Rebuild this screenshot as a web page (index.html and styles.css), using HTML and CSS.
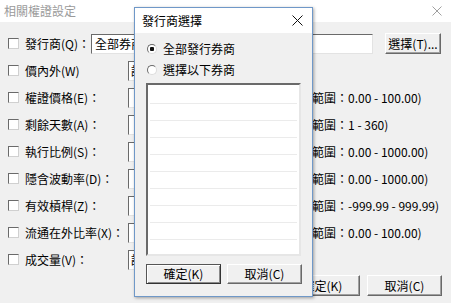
FILE: index.html
```html
<!DOCTYPE html>
<html>
  <head>
    <title>相關權證設定</title>
    <link rel="stylesheet" href="styles.css">
  </head>
  <body>
    <div class="window">
      <div class="titlebar">
        <span class="title">相關權證設定</span>
        <svg class="close" width="10" height="10" viewBox="0 0 10 10">
          <path d="M0.5 0.5 L9.5 9.5 M9.5 0.5 L0.5 9.5" stroke="#a0a0a0" stroke-width="1" fill="none" />
        </svg>
      </div>

      <div class="form">
        <div class="row">
          <span class="check"></span>
          <span class="label label-short">發行商(Q)：</span>
          <div class="field field-wide">全部券商</div>
          <div class="btn btn-pick">選擇(T)...</div>
        </div>
        <div class="row">
          <span class="check"></span>
          <span class="label">價內外(W)</span>
          <div class="field field-select">請選擇</div>
        </div>
        <div class="row">
          <span class="check"></span>
          <span class="label">權證價格(E)：</span>
          <div class="field"></div>
          <span class="range">(範圍：0.00 - 100.00)</span>
        </div>
        <div class="row">
          <span class="check"></span>
          <span class="label">剩餘天數(A)：</span>
          <div class="field"></div>
          <span class="range">(範圍：1 - 360)</span>
        </div>
        <div class="row">
          <span class="check"></span>
          <span class="label">執行比例(S)：</span>
          <div class="field"></div>
          <span class="range">(範圍：0.00 - 1000.00)</span>
        </div>
        <div class="row">
          <span class="check"></span>
          <span class="label">隱含波動率(D)：</span>
          <div class="field"></div>
          <span class="range">(範圍：0.00 - 1000.00)</span>
        </div>
        <div class="row">
          <span class="check"></span>
          <span class="label">有效槓桿(Z)：</span>
          <div class="field"></div>
          <span class="range">(範圍：-999.99 - 999.99)</span>
        </div>
        <div class="row">
          <span class="check"></span>
          <span class="label">流通在外比率(X)：</span>
          <div class="field"></div>
          <span class="range">(範圍：0.00 - 100.00)</span>
        </div>
        <div class="row">
          <span class="check"></span>
          <span class="label">成交量(V)：</span>
          <div class="field field-select">請選擇</div>
        </div>
      </div>

      <div class="actions">
        <div class="btn">確定(K)</div>
        <div class="btn">取消(C)</div>
      </div>

      <div class="dialog">
        <div class="dialog-bar">
          <span class="dialog-title">發行商選擇</span>
          <svg class="close" width="11" height="11" viewBox="0 0 11 11">
            <path d="M0.5 0.5 L10.5 10.5 M10.5 0.5 L0.5 10.5" stroke="#111" stroke-width="1" fill="none" />
          </svg>
        </div>
        <div class="dialog-body">
          <div class="radio-row">
            <span class="radio radio-on"></span>
            <span class="radio-text">全部發行券商</span>
          </div>
          <div class="radio-row">
            <span class="radio"></span>
            <span class="radio-text">選擇以下券商</span>
          </div>
          <div class="listbox">
            <div class="list-item"></div>
            <div class="list-item"></div>
            <div class="list-item"></div>
            <div class="list-item"></div>
            <div class="list-item"></div>
            <div class="list-item"></div>
            <div class="list-item"></div>
            <div class="list-item"></div>
            <div class="list-item"></div>
          </div>
          <div class="dialog-actions">
            <div class="btn btn-default">確定(K)</div>
            <div class="btn">取消(C)</div>
          </div>
        </div>
      </div>
    </div>
  </body>
</html>
```

FILE: styles.css
```css
* {
  box-sizing: border-box;
}
body {
  margin: 0;
  font: 12px/14px "Liberation Sans Narrow", "Noto Sans CJK TC", sans-serif;
  color: #000;
}
.window {
  position: relative;
  width: 451px;
  height: 303px;
  background: #f0f0f0;
  overflow: hidden;
}
.titlebar {
  height: 22px;
  background: #fff;
  color: #9a9a9a;
  display: flex;
  align-items: center;
  justify-content: space-between;
  padding: 0 9px 0 4px;
}
.form {
  padding: 8px 0 0 8px;
}
.row {
  height: 27px;
  display: flex;
  align-items: center;
}
.check {
  width: 11px;
  height: 11px;
  margin-right: 6px;
  background: #fff;
  border: 1px solid;
  border-color: #6a6a6a #d0d0d0 #d0d0d0 #6a6a6a;
}
.label {
  width: 103px;
  white-space: nowrap;
}
.label-short {
  width: 66px;
}
.field {
  width: 175px;
  height: 20px;
  padding-left: 3px;
  line-height: 18px;
  background: #fff;
  border: 1px solid;
  border-color: #6a6a6a #e3e3e3 #e3e3e3 #6a6a6a;
  white-space: nowrap;
  overflow: hidden;
}
.field-wide {
  width: 282px;
}
.field-select {
  width: 165px;
  padding-left: 2px;
}
.range {
  margin-left: 5px;
  white-space: nowrap;
}
.btn {
  width: 75px;
  height: 21px;
  display: flex;
  align-items: center;
  justify-content: center;
  background: #f0f0f0;
  border: 1px solid;
  border-color: #fff #696969 #696969 #fff;
  box-shadow: inset -1px -1px #a0a0a0;
}
.btn-pick {
  width: 56px;
  margin-left: 12px;
}
.btn-default {
  border-color: #555 #333 #333 #555;
  box-shadow: inset 1px 1px #fff, inset -1px -1px #8a8a8a;
}
.actions {
  display: flex;
  justify-content: flex-end;
  gap: 7px;
  margin-top: 2px;
  padding-right: 9px;
}
.dialog {
  position: absolute;
  left: 134px;
  top: 7px;
  width: 179px;
  height: 290px;
  background: #f0f0f0;
  border: 1px solid #6f98c8;
  box-shadow: 1px 1px 3px rgba(0, 0, 0, 0.35);
  display: flex;
  flex-direction: column;
}
.dialog-bar {
  height: 25px;
  background: #fff;
  display: flex;
  align-items: center;
  justify-content: space-between;
  padding: 0 9px 0 7px;
}
.dialog-body {
  padding: 5px 10px 0 11px;
}
.radio-row {
  height: 21px;
  display: flex;
  align-items: center;
  gap: 6px;
  padding-left: 1px;
}
.radio {
  width: 10px;
  height: 10px;
  border-radius: 50%;
  background: #fff;
  border: 1px solid;
  border-color: #6a6a6a #dcdcdc #dcdcdc #6a6a6a;
}
.radio-on {
  background: radial-gradient(circle, #111 0 2px, #fff 2.5px);
}
.radio-text {
  white-space: nowrap;
}
.listbox {
  margin-top: 3px;
  width: 155px;
  height: 173px;
  background: #fff;
  border: 2px solid;
  border-color: #6a6a6a #e6e6e6 #e6e6e6 #6a6a6a;
  padding: 2px 2px 0 2px;
  overflow: hidden;
}
.list-item {
  height: 17px;
  border-bottom: 1px solid #ebebeb;
}
.dialog-actions {
  display: flex;
  gap: 6px;
  margin-top: 8px;
}
.dialog-actions .btn {
  height: 20px;
}
```
